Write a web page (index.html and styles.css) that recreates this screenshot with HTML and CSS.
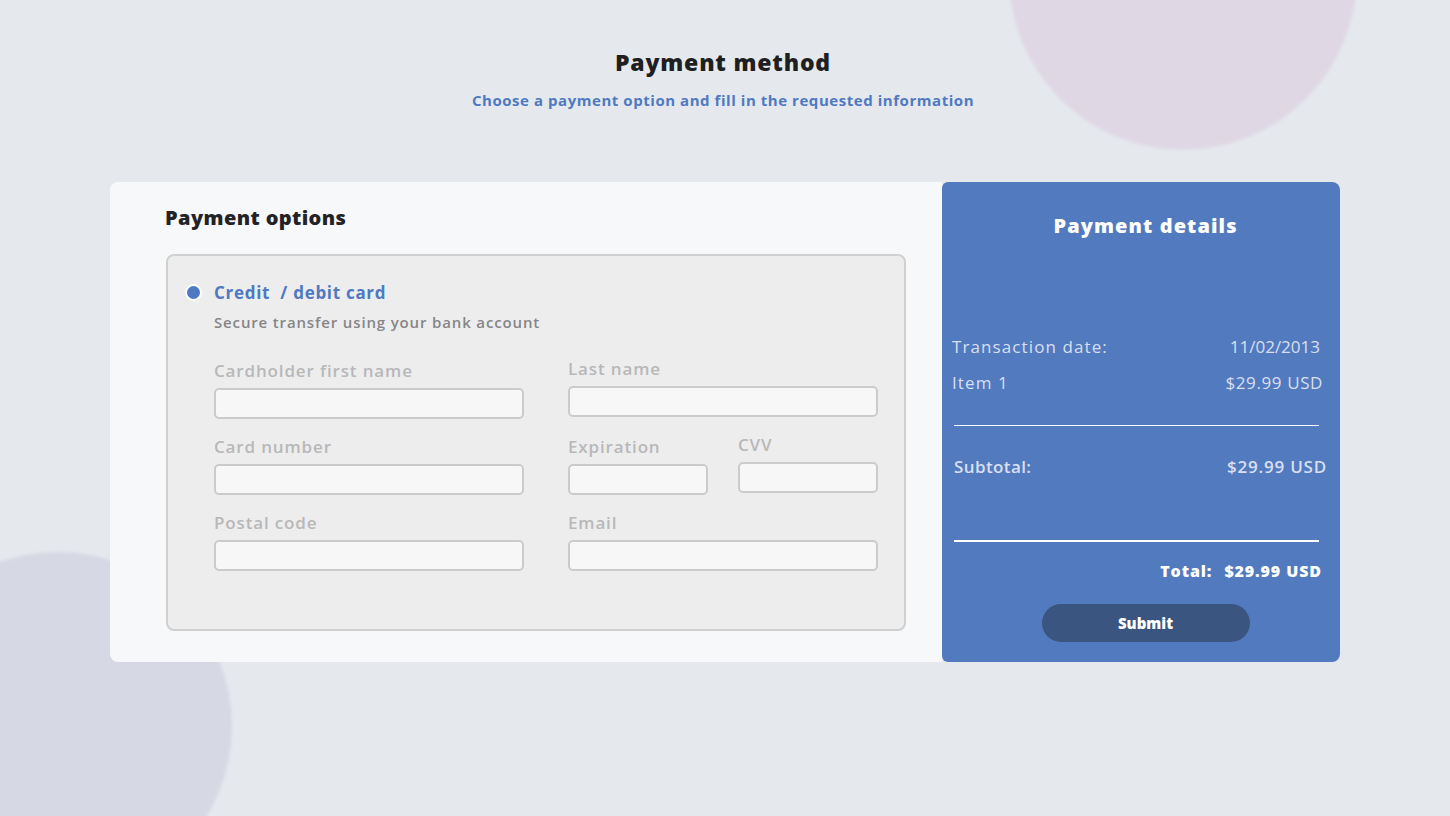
FILE: index.html
```html
<!DOCTYPE html>
<html lang="en">
<head>
<meta charset="utf-8">
<title>Payment method</title>
<link rel="stylesheet" href="styles.css">
</head>
<body>
<div class="backdrop">
  <div class="blob blob-top"></div>
  <div class="blob blob-bottom"></div>
</div>
<main class="page">
  <header class="header">
    <h1 class="title">Payment method</h1>
    <p class="subtitle">Choose a payment option and fill in the requested information</p>
  </header>
  <section class="card">
    <div class="options">
      <h2 class="options-title">Payment options</h2>
      <div class="option-box">
        <div class="option-head">
          <span class="radio"></span>
          <div>
            <div class="option-name">Credit&nbsp; / debit card</div>
            <div class="option-desc">Secure transfer using your bank account</div>
          </div>
        </div>
        <div class="form">
          <label class="field"><span class="label">Cardholder first name</span><span class="input"></span></label>
          <label class="field raised"><span class="label">Last name</span><span class="input"></span></label>
          <label class="field"><span class="label">Card number</span><span class="input"></span></label>
          <div class="pair">
            <label class="field"><span class="label">Expiration</span><span class="input"></span></label>
            <label class="field raised"><span class="label">CVV</span><span class="input"></span></label>
          </div>
          <label class="field"><span class="label">Postal code</span><span class="input"></span></label>
          <label class="field"><span class="label">Email</span><span class="input"></span></label>
        </div>
      </div>
    </div>
    <aside class="details">
      <h2 class="details-title">Payment details</h2>
      <div class="rows">
        <div class="row"><span class="key">Transaction date:</span><span class="val date">11/02/2013</span></div>
        <div class="row"><span class="key">Item 1</span><span class="val">$29.99 USD</span></div>
      </div>
      <hr class="rule thin">
      <div class="row sub"><span class="key">Subtotal:</span><span class="val">$29.99 USD</span></div>
      <hr class="rule thick">
      <div class="total"><span>Total:</span><span>$29.99 USD</span></div>
      <button class="submit" type="button">Submit</button>
    </aside>
  </section>
</main>
</body>
</html>
```
FILE: styles.css
```css
* { box-sizing: border-box; }
html, body { margin: 0; padding: 0; overflow: hidden; }
body {
  background: #e5e9ed;
  font-family: "Open Sans", "DejaVu Sans", sans-serif;
  color: #222;
  width: 1450px;
  height: 816px;
  position: relative;
}
.backdrop {
  position: absolute;
  inset: 0;
  overflow: hidden;
}
.blob {
  position: absolute;
  border-radius: 50%;
  filter: blur(1.5px);
}
.blob-top {
  width: 348px; height: 348px;
  left: 1009px; top: -198px;
  background: #dfd8e4;
}
.blob-bottom {
  width: 348px; height: 348px;
  left: -116px; top: 552px;
  background: #d6d8e4;
}
.page { position: relative; }
.header {
  text-align: center;
  padding-top: 46px;
  padding-right: 4px;
}
.title {
  margin: 0;
  font-size: 23px;
  line-height: 32px;
  font-weight: 800;
  color: #1f1f22;
  letter-spacing: 0.8px;
}
.subtitle {
  margin: 11px 0 0;
  font-size: 15px;
  line-height: 22px;
  font-weight: 700;
  color: #4f79c1;
  letter-spacing: 0.55px;
}
.card {
  margin: 71px 0 0 110px;
  width: 1230px;
  height: 480px;
  display: flex;
}
.options {
  width: 832px;
  background: #f7f8fa;
  border-radius: 8px 0 0 8px;
  padding: 22px 36px 30px 56px;
}
.options-title {
  margin: 0 0 22px -1px;
  font-size: 20px;
  line-height: 28px;
  font-weight: 800;
  color: #232325;
  letter-spacing: 0.4px;
}
.option-box {
  width: 740px;
  height: 377px;
  background: #ededee;
  border: 2px solid #d0d0d0;
  border-radius: 8px;
  padding: 24px 26px 0 46px;
}
.option-head {
  display: flex;
  margin-left: -29px;
}
.radio {
  width: 17px; height: 17px;
  border-radius: 50%;
  background: #4f79c1;
  border: 2.5px solid #fff;
  margin: 4px 12px 0 0;
  flex: none;
}
.option-name {
  font-size: 17px;
  line-height: 26px;
  font-weight: 700;
  color: #4f79c1;
  letter-spacing: 0.7px;
}
.option-desc {
  margin-top: 6px;
  font-size: 15px;
  line-height: 20px;
  font-weight: 600;
  color: #858587;
  letter-spacing: 0.85px;
}
.form {
  margin-top: 31px;
  display: grid;
  grid-template-columns: 310px 310px;
  column-gap: 44px;
  row-gap: 20px;
}
.pair {
  display: grid;
  grid-template-columns: 140px 140px;
  column-gap: 30px;
}
.field { display: flex; flex-direction: column; }
.field.raised { margin-top: -2px; }
.label {
  font-size: 17px;
  line-height: 16px;
  font-weight: 600;
  color: #b8b8b9;
  margin-bottom: 9px;
  letter-spacing: 0.85px;
}
.input {
  height: 31px;
  background: #f7f7f7;
  border: 2px solid #cbcbcb;
  border-radius: 5px;
}
.details {
  width: 398px;
  background: #527bbf;
  border-radius: 6px 8px 8px 6px;
  padding: 30px 15px 20px 10px;
  display: flex;
  flex-direction: column;
  color: #d9dff0;
}
.details-title {
  margin: 0;
  text-align: center;
  font-size: 20px;
  line-height: 28px;
  font-weight: 800;
  color: #fff;
  padding-left: 14px;
  letter-spacing: 1.1px;
}
.rows {
  margin-top: 94px;
  display: flex;
  flex-direction: column;
  gap: 10px;
}
.row {
  display: flex;
  justify-content: space-between;
  font-size: 17px;
  line-height: 26px;
  font-weight: 400;
}
.row .key { letter-spacing: 1.1px; }
.row .val { letter-spacing: 0.6px; padding-right: 2px; }
.row .date { padding-right: 5px; letter-spacing: 0; }
.row.sub {
  font-weight: 600;
  padding: 0 0 0 2px;
  margin-right: -2px;
}
.row.sub .key { letter-spacing: 0.4px; }
.row.sub .val { letter-spacing: 0.8px; padding-right: 0; }
.rule {
  border: 0;
  background: #fff;
  margin: 0 6px 0 2px;
}
.rule.thin { height: 1px; margin-top: 29px; margin-bottom: 28px; }
.rule.thick { height: 2px; margin-top: 60px; margin-bottom: 16px; }
.total {
  display: flex;
  justify-content: flex-end;
  gap: 12px;
  font-size: 16px;
  line-height: 26px;
  font-weight: 800;
  color: #fff;
  padding-right: 3px;
  letter-spacing: 0.9px;
}
.submit {
  margin: 20px auto 0;
  width: 208px;
  height: 38px;
  border: 0;
  border-radius: 19px;
  background: #3a5580;
  color: #fff;
  font-family: inherit;
  font-size: 15px;
  font-weight: 800;
  position: relative;
  left: 7px;
}
```
